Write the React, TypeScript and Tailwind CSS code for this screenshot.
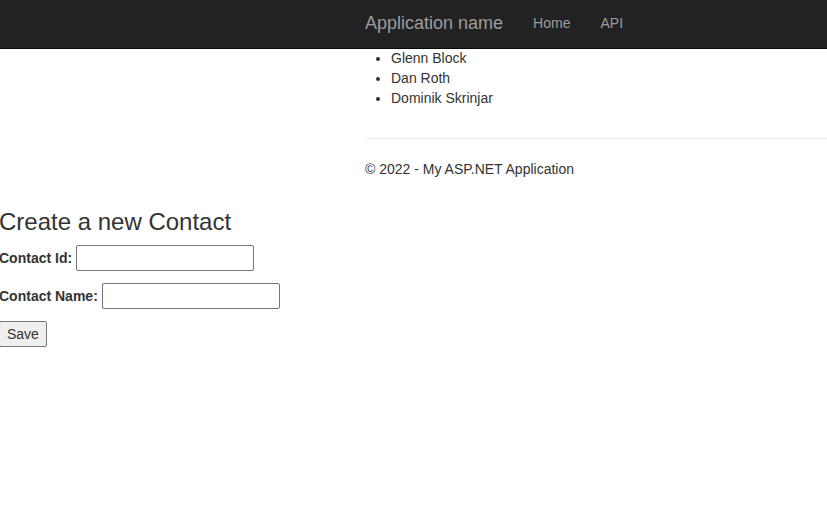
import React from "react";

const contacts = ["Glenn Block", "Dan Roth", "Dominik Skrinjar"];

const inputClass =
  "h-[26px] w-[178px] rounded-[2px] border border-[#767676] bg-white px-[2px] text-[14px] outline-none";

export default function App() {
  return (
    <div className="min-h-screen overflow-x-hidden bg-white font-['Liberation_Sans',Arial,sans-serif] text-[14px] leading-[20px] text-[#333333]">
      <header className="fixed inset-x-0 top-0 border-b border-[#080808] bg-[#222222] pl-[365px]">
        <nav className="flex h-12 items-center pb-[2px] text-[#9d9d9d]">
          <a href="#" className="mr-[15px] text-[18px]">
            Application name
          </a>
          <a href="#home" className="px-[15px]">
            Home
          </a>
          <a href="#api" className="px-[15px]">
            API
          </a>
        </nav>
      </header>

      <main className="pl-[365px] pt-12">
        <ul className="list-disc pl-[26px]">
          {contacts.map((name) => (
            <li key={name}>{name}</li>
          ))}
        </ul>
        <hr className="mb-[20px] mt-[30px] border-[#eeeeee]" />
        <footer>
          <p>© 2022 - My ASP.NET Application</p>
        </footer>
      </main>

      <form className="-ml-px mt-[30px]" onSubmit={(e) => e.preventDefault()}>
        <h3 className="mb-[10px] text-[24px] leading-[26px]">Create a new Contact</h3>
        <div className="mb-3 flex items-center gap-1">
          <label htmlFor="contact-id" className="font-bold">
            Contact Id:
          </label>
          <input id="contact-id" type="text" className={inputClass} />
        </div>
        <div className="mb-3 flex items-center gap-1">
          <label htmlFor="contact-name" className="font-bold">
            Contact Name:
          </label>
          <input id="contact-name" type="text" className={inputClass} />
        </div>
        <button
          type="submit"
          className="h-[26px] rounded-[2px] border border-[#767676] bg-[#efefef] px-[7px]"
        >
          Save
        </button>
      </form>
    </div>
  );
}
